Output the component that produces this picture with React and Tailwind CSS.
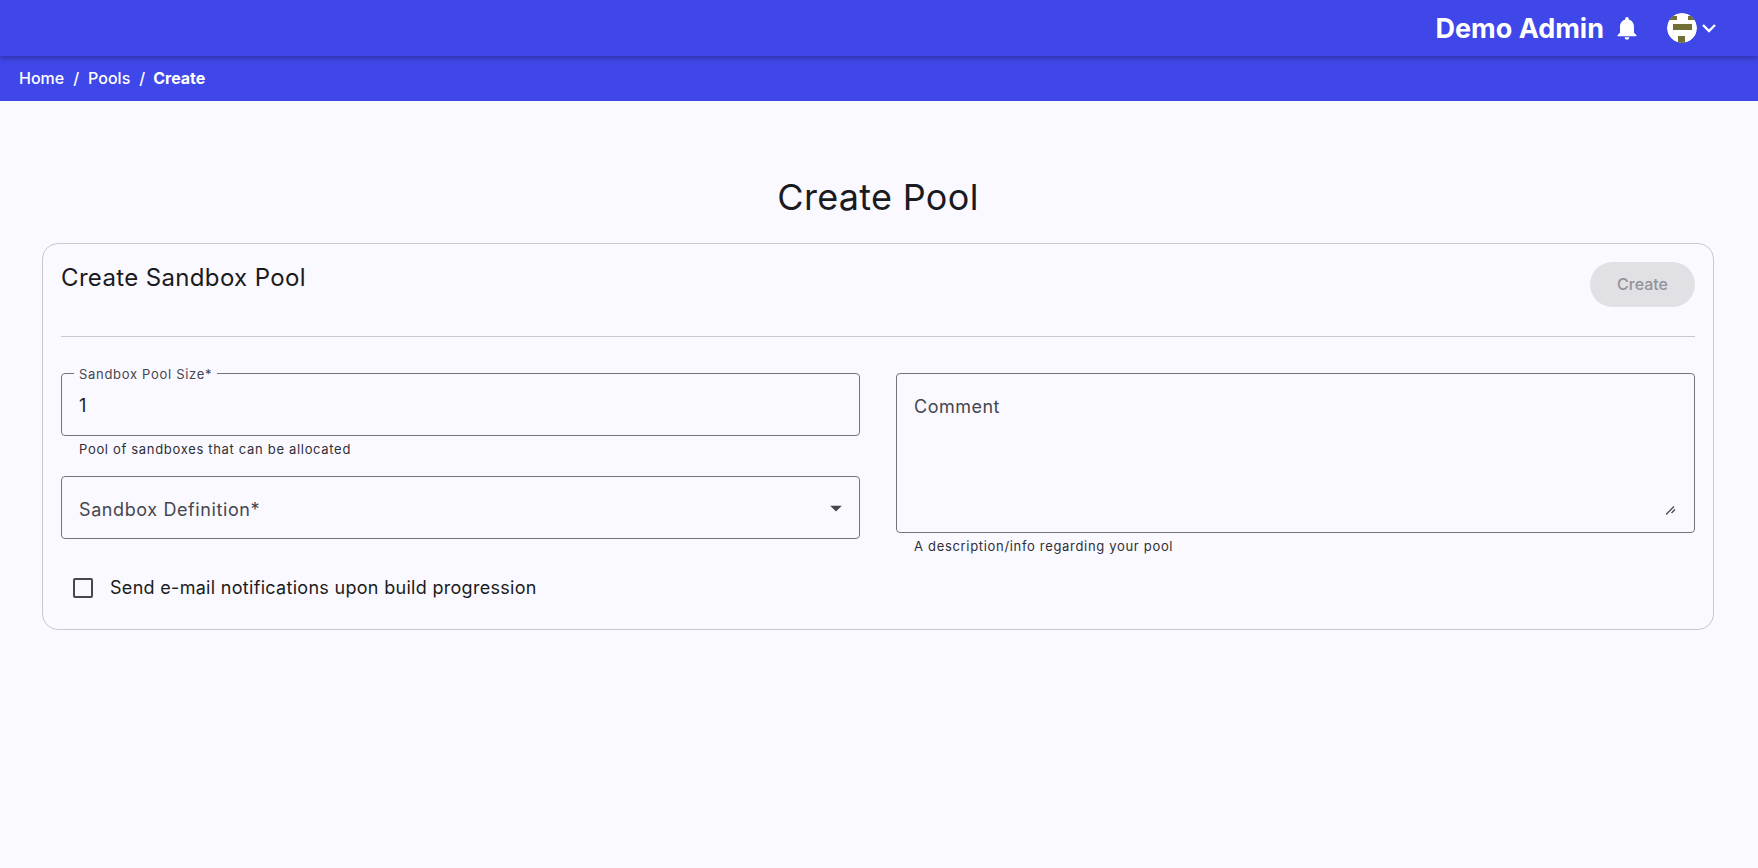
import React from 'react';

const Bell = () => (
  <svg width="28" height="28" viewBox="0 0 24 24" fill="#ffffff">
    <path d="M12 22c1.1 0 2-.9 2-2h-4c0 1.1.89 2 2 2zm6-6v-5c0-3.07-1.64-5.64-4.5-6.32V4c0-.83-.67-1.5-1.5-1.5s-1.5.67-1.5 1.5v.68C7.63 5.36 6 7.92 6 11v5l-2 2v1h16v-1l-2-2z" />
  </svg>
);

const Avatar = () => (
  <svg width="30" height="30" viewBox="0 0 30 30" className="rounded-full">
    <circle cx="15" cy="15" r="15" fill="#ffffff" />
    <rect x="0" y="3" width="10" height="4" fill="#716f35" />
    <rect x="21" y="3" width="9" height="4" fill="#716f35" />
    <rect x="6" y="11" width="19" height="6" fill="#716f35" />
    <rect x="11" y="23" width="7" height="7" fill="#716f35" />
  </svg>
);

const Chevron = () => (
  <svg width="16" height="16" viewBox="0 0 16 16" fill="none" stroke="#ffffff" strokeWidth="2.4">
    <path d="M2 5l6 6 6-6" />
  </svg>
);

export default function App() {
  return (
    <div
      className="min-h-screen bg-[#faf9ff] text-[#1a1b20]"
      style={{ fontFamily: 'Inter, "Noto Sans", sans-serif' }}
    >
      <header className="relative z-10 h-[56px] bg-[#3f47e9] shadow-[0_2px_6px_rgba(0,0,0,0.3)] flex items-center justify-end text-white pr-[41px]">
        <span className="text-[27px] font-bold leading-none">Demo Admin</span>
        <span className="ml-[9px] mr-[26px] flex"><Bell /></span>
        <span className="flex items-center">
          <Avatar />
          <span className="flex ml-[4px]"><Chevron /></span>
        </span>
      </header>

      <nav className="h-[45px] bg-[#3f47e9] flex items-center pl-[19px] pb-[2px] text-white text-[16px] font-medium">
        <span>Home</span>
        <span className="mx-[9px]">/</span>
        <span>Pools</span>
        <span className="ml-[9px] mr-[8px]">/</span>
        <span className="font-bold">Create</span>
      </nav>

      <main className="pl-[42px] pr-[44px] pt-[73px]">
        <h1 className="text-[36px] leading-[46px] font-normal tracking-[0.3px] text-center mb-[23px]">Create Pool</h1>

        <section className="border border-[#c9c8cf] rounded-[16px] px-[18px] pt-[18px] h-[387px]">
          <div className="flex justify-between items-start h-[75px] border-b border-[#c9c8cf]">
            <h2 className="text-[24px] leading-[32px] font-normal tracking-[0.35px]">Create Sandbox Pool</h2>
            <button disabled className="w-[105px] h-[45px] rounded-full bg-[#e0e0e5] text-[#92929b] text-[16px] font-medium pb-[1px]">
              Create
            </button>
          </div>

          <div className="grid grid-cols-2 gap-x-[36px] pt-[36px]">
            <div>
              <div className="relative h-[63px] border border-[#74747c] rounded-[4px] flex items-center px-[17px]">
                <span className="absolute -top-[8px] left-[12px] bg-[#faf9ff] px-[5px] text-[13px] leading-[16px] tracking-[0.7px] text-[#46464f]">
                  Sandbox Pool Size*
                </span>
                <span className="text-[18px] leading-[24px] pt-[3px]">1</span>
              </div>
              <p className="pl-[18px] mt-[5px] text-[13px] leading-[16px] tracking-[0.68px] text-[#2f2f36]">
                Pool of sandboxes that can be allocated
              </p>
              <div className="relative mt-[19px] h-[63px] border border-[#74747c] rounded-[4px] flex items-center justify-between pl-[17px] pr-[9px]">
                <span className="text-[18px] leading-[24px] tracking-[0.6px] text-[#46464f] pt-[4px]">Sandbox Definition*</span>
                <svg width="28" height="28" viewBox="0 0 24 24" fill="#46464f">
                  <path d="M7 10l5 5 5-5z" />
                </svg>
              </div>
              <label className="flex items-center mt-[37px] pl-[12px]">
                <span className="w-[20px] h-[20px] border-2 border-[#46464f] rounded-[2px]" />
                <span className="ml-[17px] text-[18px] leading-[24px] tracking-[0.3px]">
                  Send e-mail notifications upon build progression
                </span>
              </label>
            </div>

            <div>
              <div className="relative">
                <textarea
                  placeholder="Comment"
                  className="block w-full h-[160px] resize-none border border-[#74747c] rounded-[4px] px-[17px] pt-[21px] text-[18px] leading-[24px] tracking-[0.5px] placeholder:text-[#46464f] outline-none"
                />
                <svg width="10" height="10" viewBox="0 0 10 10" stroke="#46464f" strokeWidth="1.3" className="absolute right-[19px] bottom-[18px]">
                  <path d="M0 9.5L8 1.5M5.5 8L9 4.5" />
                </svg>
              </div>
              <p className="pl-[18px] mt-[5px] text-[13px] leading-[16px] tracking-[0.68px] text-[#2f2f36]">
                A description/info regarding your pool
              </p>
            </div>
          </div>
        </section>
      </main>
    </div>
  );
}
